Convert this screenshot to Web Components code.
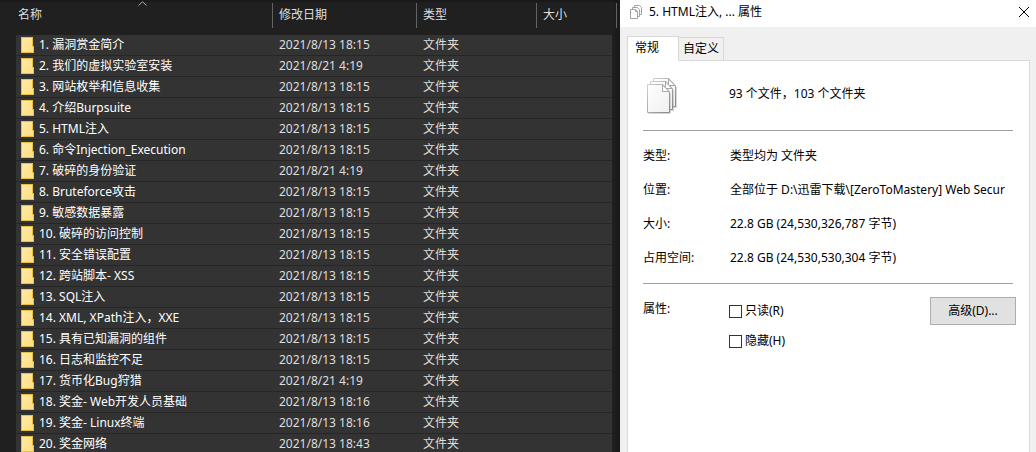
<!DOCTYPE html>
<html lang="zh-CN">
<head>
<meta charset="utf-8">
<title>属性</title>
<style>
html, body { margin: 0; height: 100%; }
body { font: 12px/20px "Noto Sans", "Noto Sans CJK SC", sans-serif; background: #202020; overflow: hidden; }
</style>
</head>
<body>
<app-desktop>
  <file-list slot="list"></file-list>
  <props-dialog slot="dialog">
    <span slot="title">5. HTML注入, ... 属性</span>
    <props-summary>93 个文件，103 个文件夹</props-summary>
    <props-rule></props-rule>
    <props-row label="类型:">类型均为 文件夹</props-row>
    <props-row label="位置:">全部位于 D:\迅雷下载\[ZeroToMastery] Web Secur</props-row>
    <props-row label="大小:">22.8 GB (24,530,326,787 字节)</props-row>
    <props-row label="占用空间:">22.8 GB (24,530,530,304 字节)</props-row>
    <props-rule></props-rule>
    <props-attributes></props-attributes>
  </props-dialog>
</app-desktop>

<script>
function define(name, html, setup) {
  const template = document.createElement('template');
  template.innerHTML = html;
  customElements.define(name, class extends HTMLElement {
    constructor() {
      super();
      this.attachShadow({ mode: 'open' }).append(template.content.cloneNode(true));
    }
    connectedCallback() { if (setup) setup(this, this.shadowRoot); }
  });
}

define('app-desktop', `
<style>
:host { display: grid; grid-template-columns: minmax(0, 1fr) 416px; min-height: 100vh; }
</style>
<slot name="list"></slot>
<slot name="dialog"></slot>`);

define('folder-icon', `
<style>:host { display: block; width: 14px; height: 16px; flex: none; } svg { display: block; }</style>
<svg width="14" height="16" viewBox="0 0 14 16" aria-hidden="true">
  <defs><linearGradient id="g" x1="0" y1="0" x2="1" y2="1"><stop offset="0" stop-color="#ffe9a6"/><stop offset="1" stop-color="#ffdf80"/></linearGradient></defs>
  <path d="M0 0H12V9H13V16H0Z" fill="#e9c140"/>
  <path d="M1 1H11V15H1Z" fill="url(#g)"/>
  <path d="M11 10H12V15H10V14H11Z" fill="#ffe391"/>
</svg>`);

const rows = [
  ['漏洞赏金简介', '13 18:15'], ['我们的虚拟实验室安装', '21 4:19'], ['网站枚举和信息收集', '13 18:15'],
  ['介绍Burpsuite', '13 18:15'], ['HTML注入', '13 18:15'], ['命令Injection_Execution', '13 18:15'],
  ['破碎的身份验证', '21 4:19'], ['Bruteforce攻击', '13 18:15'], ['敏感数据暴露', '13 18:15'],
  ['破碎的访问控制', '13 18:15'], ['安全错误配置', '13 18:15'], ['跨站脚本- XSS', '13 18:15'],
  ['SQL注入', '13 18:15'], ['XML, XPath注入，XXE', '13 18:15'], ['具有已知漏洞的组件', '13 18:15'],
  ['日志和监控不足', '13 18:15'], ['货币化Bug狩猎', '21 4:19'], ['奖金- Web开发人员基础', '13 18:16'],
  ['奖金- Linux终端', '13 18:16'], ['奖金网络', '13 18:43']
];

define('file-list', `
<style>
:host { display: block; position: relative; padding: 3px 3px 0 16px; color: #dedede;
  background: linear-gradient(to left, #191919, #202020 8px); box-shadow: inset 0 2px #191919; }
table { width: 100%; table-layout: fixed; border-spacing: 0; }
th, td { padding: 0; text-align: left; font-weight: normal; white-space: nowrap; overflow: hidden; }
th { height: 32px; vertical-align: top; }
th div { box-sizing: border-box; height: 25px; line-height: 24px; padding-left: 6px; border-left: 1px solid #636363; }
th:first-child div { padding-left: 2px; border: 0; }
th:last-child { padding-left: 4px; }
th:last-child div { padding: 0; }
td { height: 20px; line-height: 20px; padding-left: 7px; background: #333; border-bottom: 1px solid #262626; }
td:first-child { padding-left: 5px; color: #fff; }
td:last-child { background: none; border: 0; padding: 0; }
.name { display: flex; align-items: center; gap: 4px; }
col:nth-child(2) { width: 144px; }
col:nth-child(3) { width: 120px; }
col:nth-child(4) { width: 76px; }
col:nth-child(5) { width: 5px; }
.sort { position: absolute; left: 138px; top: 1px; }
</style>
<svg class="sort" width="9" height="5" viewBox="0 0 9 5" fill="none" stroke="#aaa" aria-hidden="true"><path d="M.5 4.5L4.5 .7L8.5 4.5"/></svg>
<table>
  <colgroup><col><col><col><col><col></colgroup>
  <thead><tr><th><div>名称</div></th><th><div>修改日期</div></th><th><div>类型</div></th><th><div>大小</div></th><th><div></div></th></tr></thead>
  <tbody></tbody>
</table>`, (host, root) => {
  root.querySelector('tbody').innerHTML = rows.map(([name, date], i) =>
    `<tr><td><div class="name"><folder-icon></folder-icon><span>${i + 1}. ${name}</span></div></td><td>2021/8/${date}</td><td>文件夹</td><td></td><td></td></tr>`).join('');
});

define('pages-icon', `
<style>:host { display: block; flex: none; width: 32px; height: 41px; } svg { display: block; width: 100%; height: 100%; }
.small { display: none; } :host([small]) .small { display: block; } :host([small]) .large { display: none; }
:host([small]) { width: 12px; height: 14px; }</style>
<svg class="large" viewBox="0 -4 32 41" aria-hidden="true">
  <defs>
    <linearGradient id="p" x1="0" y1="0" x2="1" y2="1"><stop offset="0" stop-color="#fff"/><stop offset="1" stop-color="#f0f0f0"/></linearGradient>
    <linearGradient id="e" x1="0" y1="0" x2="1" y2="1"><stop offset="0" stop-color="#d0d0d0"/><stop offset="1" stop-color="#868686"/></linearGradient>
    <g id="page"><path d="M.5 .5H16L22.5 8V28.5H.5Z" fill="url(#p)" stroke="url(#e)"/><path d="M15.500 1V7.500H22Z" fill="#fff" stroke="#a8a8a8"/><path d="M1 29.500H23.500V9" fill="none" stroke="#bdbdbd" stroke-opacity=".6"/></g>
  </defs>
  <use href="#page" x="7" y="1"/><use href="#page" x="4" y="4"/><use href="#page" x="1" y="7"/>
</svg>
<svg class="small" viewBox="0 0 12 14" fill="#fff" stroke="#a2a2a2" aria-hidden="true">
  <path d="M4.500 .5H9.500L11.500 2.500V9.500H4.500Z"/><path d="M2.500 2.500H7.500L9.500 4.500V11.500H2.500Z"/><path d="M.5 4.500H5.500L7.500 6.500V13.500H.5Z"/><path d="M5.500 4.500V6.500H7.500" fill="none"/>
</svg>`);

define('props-dialog', `
<style>
:host { display: flex; flex-direction: column; box-sizing: border-box; color: #000; background: #f0f0f0; }
header { display: flex; align-items: center; height: 27px; padding: 0 7px 4px 10px; gap: 7px; box-sizing: border-box; background: #fff; }
.title { flex: 1; }
button { font: inherit; color: inherit; margin: 0; padding: 0; border: 0; background: none; }
.close { width: 10px; height: 10px; }
svg { display: block; }
nav { display: flex; align-items: flex-end; margin: 9px 6px 0 7px; }
.tab { box-sizing: border-box; height: 23px; padding: 0 4px; border: 1px solid #d9d9d9; border-left: 0; border-bottom: 0; line-height: 22px; }
.tab.on { position: relative; height: 25px; width: 52px; margin-bottom: -1px; padding: 0 0 3px 7px; text-align: left; background: #fff; border-left: 1px solid #d9d9d9; line-height: 20px; }
main { flex: 1; margin: 0 6px 0 7px; padding: 11px 13px 0 15px; background: #fff; border: 1px solid #d9d9d9; border-bottom: 0; }
</style>
<header>
  <pages-icon small></pages-icon>
  <span class="title"><slot name="title"></slot></span>
  <button class="close" aria-label="关闭"><svg width="10" height="10" viewBox="0 0 10 10" stroke="#000" fill="none"><path d="M0 0L10 10M10 0L0 10"/></svg></button>
</header>
<nav role="tablist"><button class="tab on" role="tab" aria-selected="true">常规</button><button class="tab" role="tab" aria-selected="false">自定义</button></nav>
<main role="tabpanel"><slot></slot></main>`);

define('props-summary', `
<style>
:host { display: grid; grid-template-columns: 83px 1fr; padding-left: 3px; align-items: center; height: 43px; }
</style>
<pages-icon></pages-icon><span><slot></slot></span>`);

define('props-rule', `
<style>:host { display: block; } hr { margin: 15px 3px 13px 0; border: 0; border-top: 1px solid #a0a0a0; }</style><hr>`);

define('props-row', `
<style>
:host { display: grid; grid-template-columns: 87px minmax(0, 1fr); line-height: 20px; padding-top: 2px; margin-bottom: 12px; white-space: nowrap; }
.value { overflow: hidden; }
</style>
<span class="label"></span><span class="value"><slot></slot></span>`, (host, root) => {
  root.querySelector('.label').textContent = host.getAttribute('label');
});

define('props-attributes', `
<style>
:host { display: grid; grid-template-columns: 86px 1fr 86px; align-items: start; line-height: 20px; }
.caption { padding-top: 2px; }
.checks { display: grid; gap: 10px; padding-top: 4px; }
label { display: flex; align-items: center; gap: 3px; }
input { appearance: none; width: 13px; height: 13px; margin: 0; border: 1px solid #333; background: #fff; }
button { box-sizing: border-box; height: 28px; padding: 0; font: inherit; color: #000; background: #e1e1e1; border: 1px solid #adadad; }
</style>
<span class="caption">属性:</span>
<div class="checks">
  <label><input type="checkbox">只读(R)</label>
  <label><input type="checkbox">隐藏(H)</label>
</div>
<button>高级(D)...</button>`);
</script>
</body>
</html>
